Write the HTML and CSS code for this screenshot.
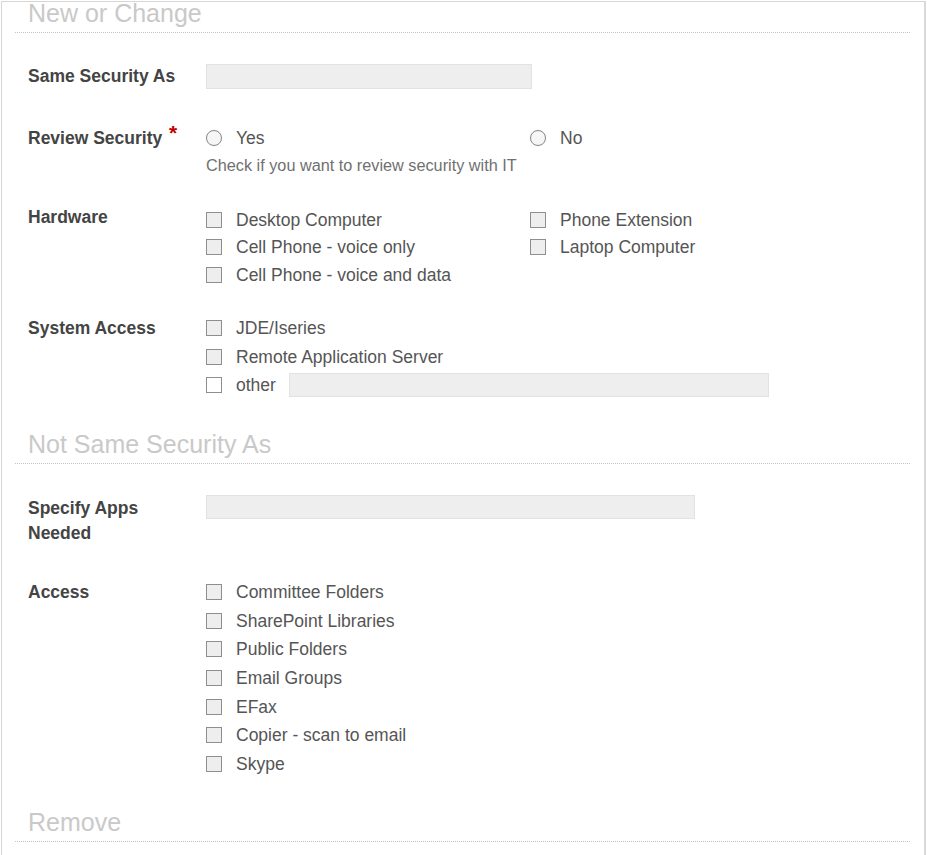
FILE: index.html
```html
<!DOCTYPE html>
<html>
<head>
<meta charset="utf-8">
<link rel="stylesheet" href="styles.css">
</head>
<body>
<div class="panel">
  <h2 class="section-title">New or Change</h2>

  <div class="row row-same">
    <div class="label">Same Security As</div>
    <div class="controls"><div class="field field-same"></div></div>
  </div>

  <div class="row row-review">
    <div class="label">Review Security <span class="req">*</span></div>
    <div class="controls">
      <div class="grid2 lines-28">
        <div class="opt"><span class="radio"></span><span class="opt-text">Yes</span></div>
        <div class="opt"><span class="radio"></span><span class="opt-text">No</span></div>
      </div>
      <div class="help">Check if you want to review security with IT</div>
    </div>
  </div>

  <div class="row row-hardware">
    <div class="label label-up">Hardware</div>
    <div class="controls">
      <div class="grid2 hw">
        <div class="col">
          <div class="opt"><span class="box"></span><span class="opt-text">Desktop Computer</span></div>
          <div class="opt"><span class="box"></span><span class="opt-text">Cell Phone - voice only</span></div>
          <div class="opt"><span class="box"></span><span class="opt-text">Cell Phone - voice and data</span></div>
        </div>
        <div class="col">
          <div class="opt"><span class="box"></span><span class="opt-text">Phone Extension</span></div>
          <div class="opt"><span class="box"></span><span class="opt-text">Laptop Computer</span></div>
        </div>
      </div>
    </div>
  </div>

  <div class="row row-system">
    <div class="label">System Access</div>
    <div class="controls sys">
      <div class="opt"><span class="box"></span><span class="opt-text">JDE/Iseries</span></div>
      <div class="opt"><span class="box"></span><span class="opt-text">Remote Application Server</span></div>
      <div class="opt"><span class="box box-white"></span><span class="opt-text">other</span><span class="field field-other"></span></div>
    </div>
  </div>

  <h2 class="section-title title-2">Not Same Security As</h2>

  <div class="row row-apps">
    <div class="label label-25">Specify Apps<br>Needed</div>
    <div class="controls"><div class="field field-apps"></div></div>
  </div>

  <div class="row row-access">
    <div class="label">Access</div>
    <div class="controls access">
      <div class="opt"><span class="box"></span><span class="opt-text">Committee Folders</span></div>
      <div class="opt"><span class="box"></span><span class="opt-text">SharePoint Libraries</span></div>
      <div class="opt"><span class="box"></span><span class="opt-text">Public Folders</span></div>
      <div class="opt"><span class="box"></span><span class="opt-text">Email Groups</span></div>
      <div class="opt"><span class="box"></span><span class="opt-text">EFax</span></div>
      <div class="opt"><span class="box"></span><span class="opt-text">Copier - scan to email</span></div>
      <div class="opt"><span class="box"></span><span class="opt-text">Skype</span></div>
    </div>
  </div>

  <h2 class="section-title title-3">Remove</h2>
</div>
</body>
</html>
```

FILE: styles.css
```css
html, body {
  margin: 0;
  padding: 0;
  background: #ffffff;
  overflow: hidden;
}

body {
  font-family: "Liberation Sans", Arial, sans-serif;
  color: #555555;
}

.panel {
  margin-top: 1px;
  margin-left: 1px;
  width: 895px;
  border-top: 1px solid #d6d6d6;
  border-left: 1px solid #d6d6d6;
  border-right: 2px solid #d9d9d9;
  padding: 0 14px 60px 13px;
}

.section-title {
  margin: 0;
  padding: 0 0 8px 13px;
  font-size: 25px;
  line-height: 22px;
  font-weight: normal;
  color: #c9c9c9;
  border-bottom: 1px dotted #c4c4c4;
}

.title-2 { margin-top: 33px; }
.title-3 { margin-top: 33px; }

.row {
  display: flex;
  padding-left: 13px;
}

.label {
  width: 178px;
  flex: none;
  font-size: 17.5px;
  font-weight: bold;
  line-height: 28px;
  color: #444444;
}

.label-25 {
  line-height: 25px;
  padding-top: 1px;
}
.label-up { margin-top: -3px; }

.req {
  color: #c00000;
  font-size: 21px;
  margin-left: 2px;
  vertical-align: 4px;
  line-height: 0;
}

.controls {
  flex: 1;
  font-size: 17.5px;
}

.row-same {
  margin-top: 29px;
  align-items: center;
  height: 28px;
}

.field {
  display: block;
  background: #eeeeee;
  border: 1px solid #e2e2e2;
  box-sizing: border-box;
}

.field-same { width: 326px; height: 25px; }
.field-apps { width: 489px; height: 24px; }
.field-other {
  display: inline-block;
  width: 480px;
  height: 24px;
  margin-left: 13px;
}

.row-review { margin-top: 34px; }
.row-hardware { margin-top: 28px; }
.row-system { margin-top: 25.5px; }
.row-apps { margin-top: 31px; }
.row-access { margin-top: 32px; }

.grid2 {
  display: grid;
  grid-template-columns: 324px 1fr;
}

.lines-28 .opt { height: 28px; }
.hw .opt { height: 27.5px; }
.sys .opt { height: 28.5px; }
.access .opt { height: 28.7px; }

.opt {
  display: flex;
  align-items: center;
  line-height: 28px;
  white-space: nowrap;
}

.opt-text {
  color: #555555;
}

.box {
  width: 16px;
  height: 16px;
  box-sizing: border-box;
  border: 1px solid #8e8e8e;
  background: #eeeeee;
  margin-right: 14px;
  flex: none;
}

.box-white { background: #ffffff; }

.radio {
  width: 16px;
  height: 16px;
  box-sizing: border-box;
  border: 1px solid #8a8a8a;
  border-radius: 50%;
  background: #f6f6f6;
  box-shadow: 0 0 0 0.5px #efefef;
  margin-right: 14px;
  flex: none;
}

.help {
  font-size: 16.25px;
  line-height: 26px;
  color: #707070;
}
```
